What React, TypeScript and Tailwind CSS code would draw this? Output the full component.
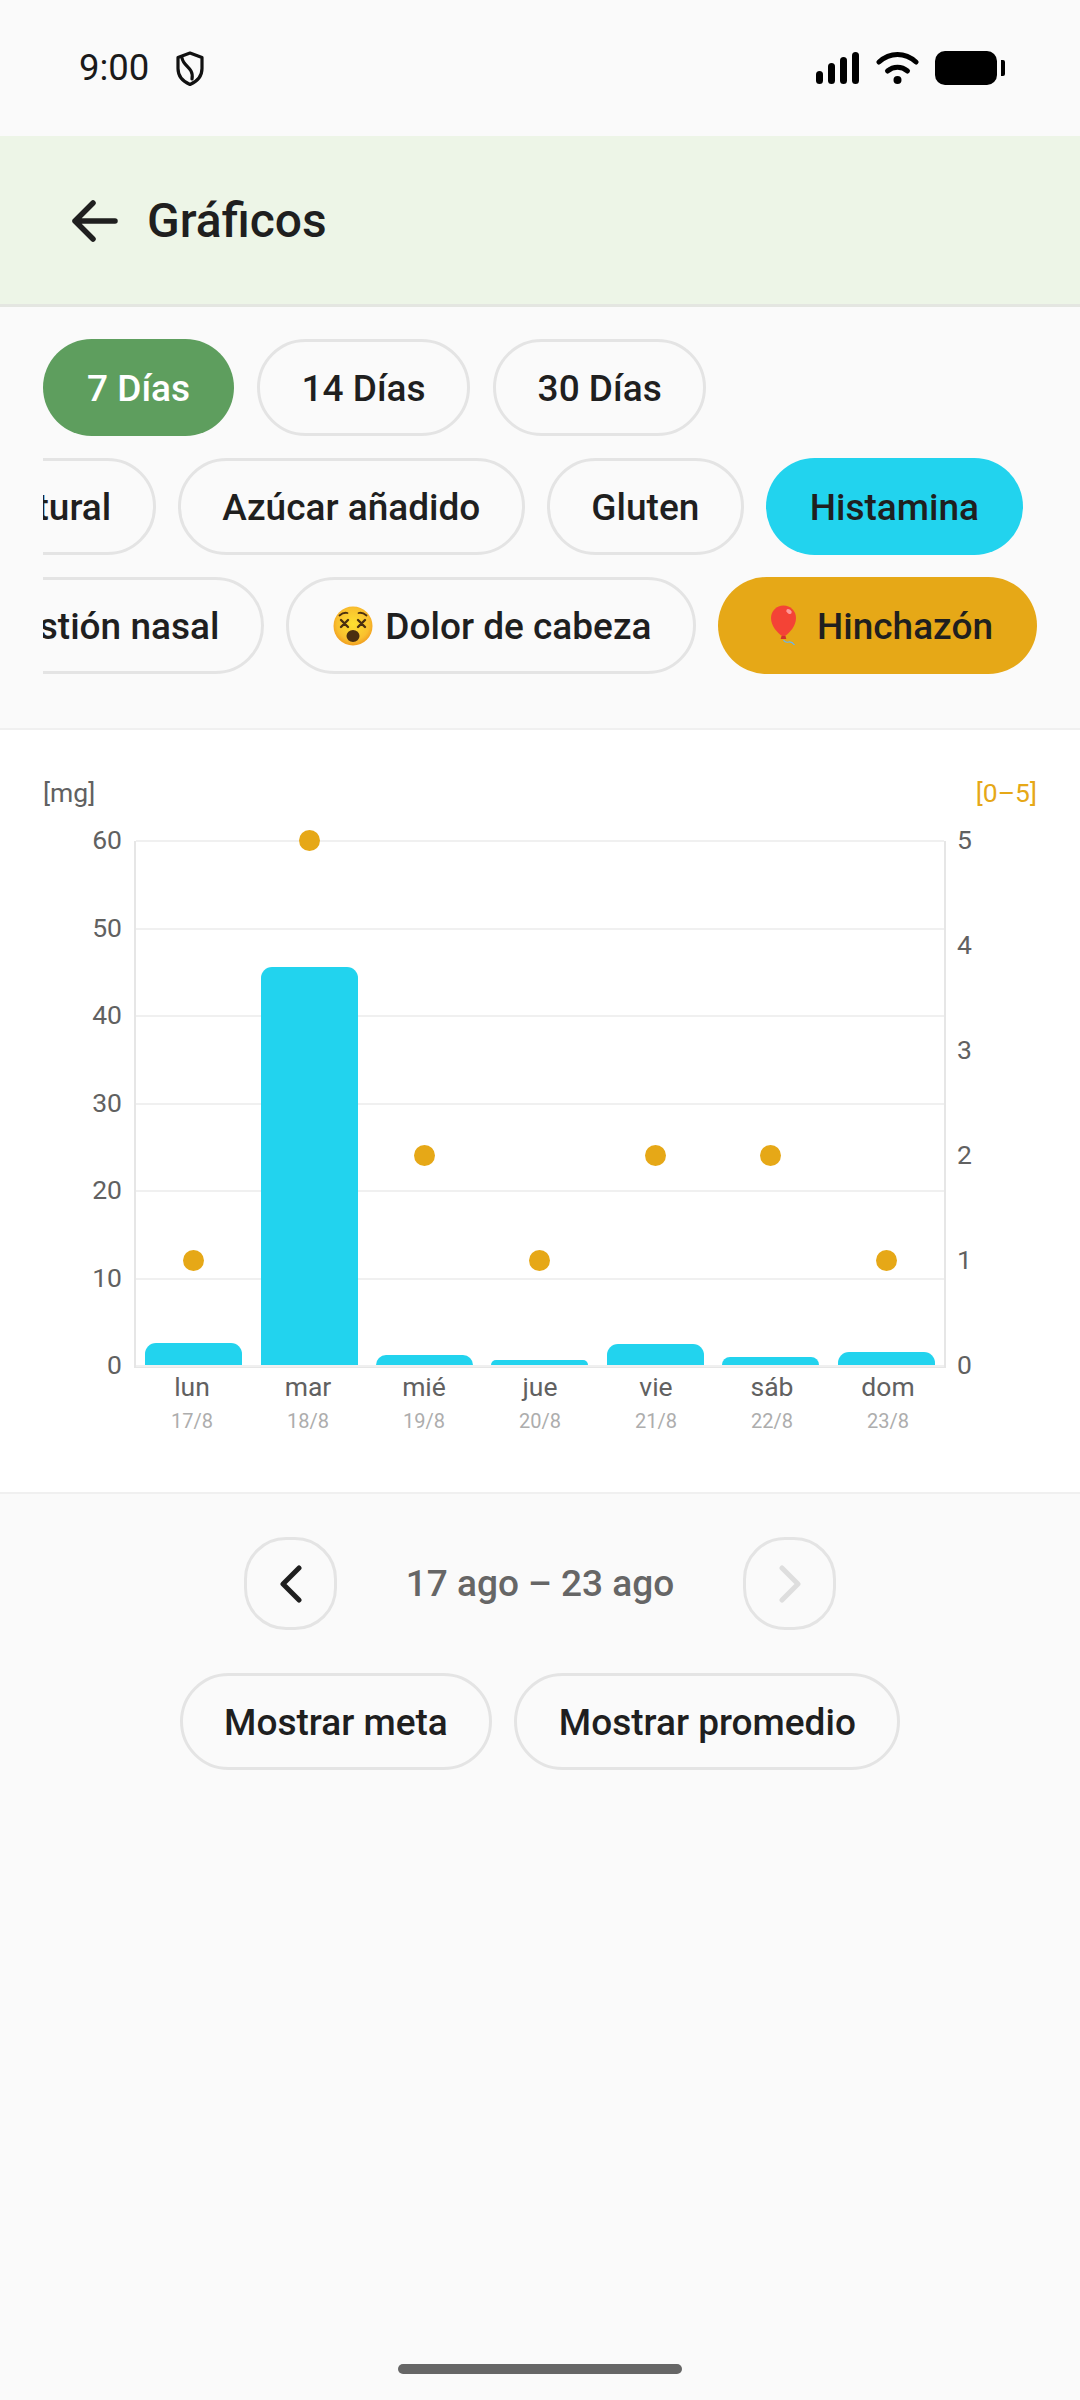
import React from "react";

const font = { fontFamily: "Roboto, sans-serif" };

const days = [
  { day: "lun", date: "17/8", bar: 22, dot: 1 },
  { day: "mar", date: "18/8", bar: 398, dot: 5 },
  { day: "mié", date: "19/8", bar: 10, dot: 2 },
  { day: "jue", date: "20/8", bar: 5, dot: 1 },
  { day: "vie", date: "21/8", bar: 21, dot: 2 },
  { day: "sáb", date: "22/8", bar: 8, dot: 2 },
  { day: "dom", date: "23/8", bar: 13, dot: 1 },
];

function Chip({ children, bg }: { children: React.ReactNode; bg?: string }) {
  return (
    <div
      className={`h-[97px] shrink-0 rounded-full flex items-center justify-center gap-[9px] pt-[2px] text-[37px] font-medium whitespace-nowrap text-[#1f1f1f] ${
        bg ?? "px-[41.500px] border-[3px] border-[#e4e4e4]"
      }`}
    >
      {children}
    </div>
  );
}

function DizzyFace() {
  return (
    <div className="w-[46px] flex justify-center -mt-[1px]">
      <svg width="40" height="40" viewBox="0 0 40 40" className="shrink-0">
        <defs>
          <radialGradient id="face" cx="50%" cy="45%" r="55%">
            <stop offset="0%" stopColor="#fde030" />
            <stop offset="75%" stopColor="#f9c02e" />
            <stop offset="100%" stopColor="#f19e20" />
          </radialGradient>
        </defs>
        <circle cx="20" cy="20" r="19.5" fill="url(#face)" />
        <g stroke="#4a2f10" strokeWidth="2.4" strokeLinecap="round" fill="none">
          <path d="M8 14l7 7M15 14l-7 7M25 14l7 7M32 14l-7 7" />
          <path d="M6.500 9.500q4-3.500 8-2.500M33.500 9.500q-4-3.500-8-2.500" strokeWidth="1.800" />
        </g>
        <ellipse cx="20" cy="30" rx="6.500" ry="6" fill="#4a2f10" />
      </svg>
    </div>
  );
}

function Balloon() {
  return (
    <div className="w-[46px] flex justify-center -mt-[2px]">
      <svg width="30" height="42" viewBox="0 0 30 42" className="shrink-0">
        <path d="M13.500 0.500C6.500 0.500 1 6 1 13c0 8 6.500 15 11 18h3c4.500-3 11-10 11-18C26 6 20.500 0.500 13.500 0.500z" fill="#f44336" />
        <ellipse cx="19" cy="6.500" rx="3" ry="2" fill="#f99" transform="rotate(35 19 6.500)" />
        <path d="M11.500 31h4l.8 3h-5.600z" fill="#d32f2f" />
        <path d="M13.500 35q2 3 5 2t6 3" stroke="#64b5f6" strokeWidth="1.200" fill="none" />
      </svg>
    </div>
  );
}

function StatusBar() {
  return (
    <div className="h-[136px] flex items-center justify-between pl-[79px] pr-[75px] pb-[1px]">
      <div className="flex items-center gap-[26px] text-[36.5px] mt-[2px] text-[#1a1a1a]">
        <span>9:00</span>
        <svg width="30" height="36" viewBox="0 0 30 36" fill="none" stroke="#111" strokeWidth="3.200" strokeLinejoin="round">
          <path d="M15 2l12 4.500v11c0 7.500-5 13-12 16-7-3-12-8.500-12-16v-11z" />
          <path d="M7 7c1 6 6 8 9 13 1.500 2.500 1.500 5 1 8" strokeLinecap="round" />
        </svg>
      </div>
      <div className="flex items-center gap-[16px]">
        <div className="flex items-end gap-[5px] h-[32px] -ml-[2px] mr-[1px]">
          <div className="w-[7px] h-[13px] rounded-full bg-black" />
          <div className="w-[7px] h-[21px] rounded-full bg-black" />
          <div className="w-[7px] h-[27px] rounded-full bg-black" />
          <div className="w-[7px] h-[32px] rounded-full bg-black" />
        </div>
        <svg width="43" height="33" viewBox="0 0 43 33" fill="none" stroke="#000" strokeWidth="5" strokeLinecap="round">
          <path d="M3 11C14 1 29 1 40 11" />
          <path d="M11.500 20c6-5 14-5 20 0" />
          <circle cx="21.500" cy="29" r="4" fill="#000" stroke="none" />
        </svg>
        <div className="flex items-center gap-[4px]">
          <div className="w-[62px] h-[34px] rounded-[10px] bg-black" />
          <div className="w-[4px] h-[16px] rounded-r-[2px] bg-black" />
        </div>
      </div>
    </div>
  );
}

function Chart() {
  return (
    <div className="h-[766px] bg-white border-y-[2px] border-[#f0f0f0] px-[43px] pt-[48px] text-[26.5px] text-[#616161]">
      <div className="flex justify-between leading-[30px]">
        <span>[mg]</span>
        <span className="text-[#e6a817]">[0–5]</span>
      </div>
      <div className="flex mt-[33px]">
        <div className="w-[91px] h-[555px] -mt-[16px] pr-[12px] flex flex-col justify-between items-end leading-[30px]">
          {[60, 50, 40, 30, 20, 10, 0].map((n) => (
            <span key={n}>{n}</span>
          ))}
        </div>
        <div className="relative w-[812px] h-[527px] border-x-[2px] border-b-[3px] border-[#e6e6e6]">
          <div className="absolute inset-x-0 -top-[1px] h-[527px] flex flex-col justify-between">
            {[0, 1, 2, 3, 4, 5, 6].map((n) => (
              <div key={n} className="h-[2px] bg-[#f0f0f0]" />
            ))}
          </div>
          <div className="relative flex h-full">
            {days.map((d) => (
              <div key={d.day} className="relative flex-1 flex items-end justify-center">
                <div className="w-[97px] rounded-t-[11px] bg-[#22d3ee]" style={{ height: d.bar }} />
                <div
                  className="absolute left-1/2 -ml-[10.500px] w-[21px] h-[21px] rounded-full bg-[#e6a817]"
                  style={{ bottom: d.dot * 105 - 10.5 }}
                />
              </div>
            ))}
          </div>
        </div>
        <div className="h-[555px] -mt-[16px] pl-[11px] flex flex-col justify-between leading-[30px]">
          {[5, 4, 3, 2, 1, 0].map((n) => (
            <span key={n}>{n}</span>
          ))}
        </div>
      </div>
      <div className="flex ml-[91px] w-[812px] -mt-[8px] text-center">
        {days.map((d) => (
          <div key={d.day} className="flex-1">
            <div className="leading-[30px]">{d.day}</div>
            <div className="mt-[6px] text-[20px] leading-[26px] text-[#adadad]">{d.date}</div>
          </div>
        ))}
      </div>
    </div>
  );
}

export default function App() {
  return (
    <div className="min-h-[2400px] bg-[#fafafa] flex flex-col" style={font}>
      <StatusBar />
      <div className="h-[171px] bg-[#edf5e7] border-b-[3px] border-[#e4e6e1] flex items-center pl-[72px] gap-[29px] pt-[1px]">
        <svg width="46" height="42" viewBox="0 0 46 42" fill="none" stroke="#1f1f1f" strokeWidth="5.500" strokeLinecap="round" strokeLinejoin="round">
          <path d="M43 21H3M21 3L3 21l18 18" />
        </svg>
        <span className="text-[48px] font-medium text-[#1f1f1f]">Gráficos</span>
      </div>

      <div className="pt-[32px] pb-[54px] flex flex-col gap-[22px]">
        <div className="flex gap-[23px] pl-[43px]">
          <Chip bg="px-[44px] bg-[#5e9e5e] !text-white">7 Días</Chip>
          <Chip>14 Días</Chip>
          <Chip>30 Días</Chip>
        </div>
        <div className="ml-[43px] overflow-hidden flex justify-end gap-[22px] pr-[57px]">
          <Chip>Azúcar natural</Chip>
          <Chip>Azúcar añadido</Chip>
          <Chip>Gluten</Chip>
          <Chip bg="px-[44px] bg-[#22d3ee]">Histamina</Chip>
        </div>
        <div className="ml-[43px] overflow-hidden flex justify-end gap-[22px] pr-[43px]">
          <Chip>Congestión nasal</Chip>
          <Chip>
            <DizzyFace />
            Dolor de cabeza
          </Chip>
          <Chip bg="px-[44px] bg-[#e6a817]">
            <Balloon />
            Hinchazón
          </Chip>
        </div>
      </div>

      <Chart />

      <div className="mt-[43px] flex items-center justify-center">
        <div className="w-[93px] h-[93px] rounded-[42px] border-[3px] border-[#e4e4e4] flex items-center justify-center">
          <svg width="24" height="38" viewBox="0 0 24 38" fill="none" stroke="#1f1f1f" strokeWidth="5" strokeLinecap="round" strokeLinejoin="round">
            <path d="M20 3L4 19l16 16" />
          </svg>
        </div>
        <div className="w-[406px] text-center text-[37px] font-medium text-[#666666]">17 ago – 23 ago</div>
        <div className="w-[93px] h-[93px] rounded-[42px] border-[3px] border-[#e4e4e4] flex items-center justify-center">
          <svg width="24" height="38" viewBox="0 0 24 38" fill="none" stroke="#dedede" strokeWidth="5" strokeLinecap="round" strokeLinejoin="round">
            <path d="M4 3l16 16L4 35" />
          </svg>
        </div>
      </div>

      <div className="mt-[43px] flex justify-center gap-[22px]">
        <Chip>Mostrar meta</Chip>
        <Chip>Mostrar promedio</Chip>
      </div>

      <div className="mt-auto pb-[26px] flex justify-center">
        <div className="w-[284px] h-[10px] rounded-full bg-[#666666]" />
      </div>
    </div>
  );
}
